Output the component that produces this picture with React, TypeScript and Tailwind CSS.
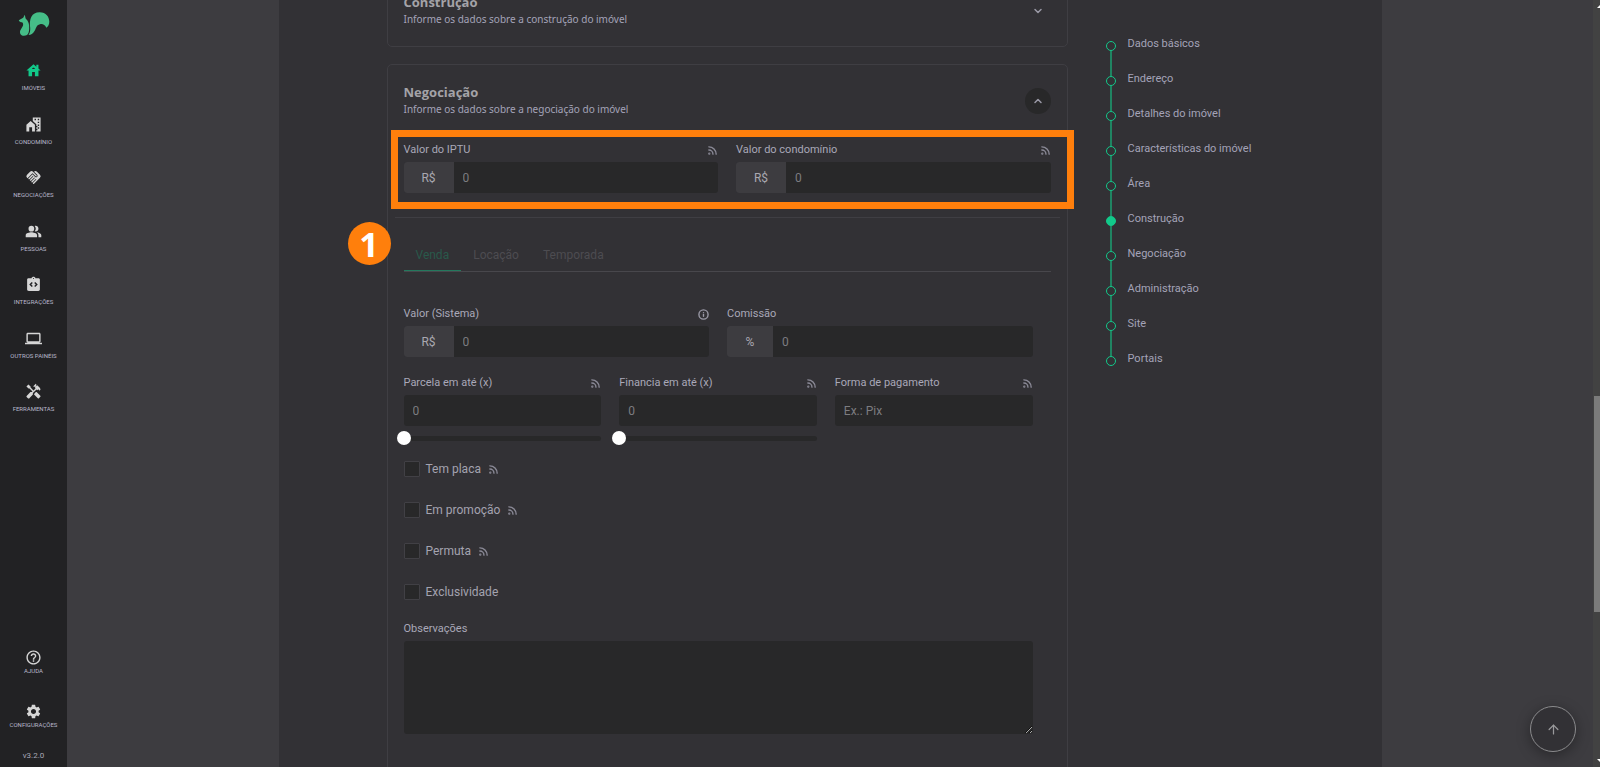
import { ReactNode } from "react"
import { ArrowUp, ChevronDown, ChevronUp, Info, Rss } from "lucide-react"
import {
  MdComputer,
  MdHandshake,
  MdHandyman,
  MdHelpOutline,
  MdHouse,
  MdIntegrationInstructions,
  MdPeopleAlt,
  MdSettings,
} from "react-icons/md"

function CondoIcon({ className }: { className?: string }) {
  return (
    <svg viewBox="0 0 24 24" fill="currentColor" className={className}>
      <path d="M2 22V12.500L8 7l6 5.500V22h-4v-6H6v6z" />
      <path
        fillRule="evenodd"
        d="M11 2h11v20h-6v-2h1.500v-2H16v-2h1.500v-2H16v-2.500l-5-4.500zM13.500 4v2h2V4zM18 4v2h2V4zM18 8v2h2V8zM18 12v2h2v-2zM18 16v2h2v-2z"
      />
    </svg>
  )
}

const mainMenu = [
  { label: "Imóveis", icon: MdHouse, active: true },
  { label: "Condomínio", icon: CondoIcon },
  { label: "Negociações", icon: MdHandshake },
  { label: "Pessoas", icon: MdPeopleAlt },
  { label: "Integrações", icon: MdIntegrationInstructions },
  { label: "Outros painéis", icon: MdComputer },
  { label: "Ferramentas", icon: MdHandyman },
]

const steps = [
  "Dados básicos",
  "Endereço",
  "Detalhes do imóvel",
  "Características do imóvel",
  "Área",
  "Construção",
  "Negociação",
  "Administração",
  "Site",
  "Portais",
]

const options = [
  { id: "placa", label: "Tem placa", feed: true },
  { id: "promocao", label: "Em promoção", feed: true },
  { id: "permuta", label: "Permuta", feed: true },
  { id: "exclusividade", label: "Exclusividade", feed: false },
]

function Logo() {
  return (
    <svg viewBox="0 0 33 26" className="w-[33px] h-[26px]" aria-label="Início">
      <path
        fill="#45bd87"
        d="M1.800 9.200L6.200 6.800 7.800 3.800l.8 3.800c2.900 2.400 4 5.900 3.600 10.400-.2 3-.8 4.800-2.200 6-2.500 1.400-6 1-6.800-1.500C2.200 19.500 5 17.500 6 14.600c.4-1.600 0-2.800-1-3.300-1.400-.1-2.800-.5-3.200-2.100z"
      />
      <path
        fill="#45bd87"
        d="M13.200 17C12 8 14.500 1.300 22.700 1.300c6.300 0 9.600 4.700 9.600 9.400 0 2.800-1.300 5.100-3 6.100-1.300-3.300-3.800-4.200-6.300-3.600-4 1-3.500 3.800-5.500 6.800-1.500 2.600-3.500 4-6 4 1.300-2 1.900-4 1.700-7z"
      />
    </svg>
  )
}

function MenuItem({ label, icon: Icon, active }: { label: string; icon: any; active?: boolean }) {
  return (
    <a href="#" className="flex flex-1 flex-col items-center gap-1">
      <Icon className={active ? "w-[17px] h-[17px] text-[#12c98a]" : "w-[17px] h-[17px] text-[#d6d6d6]"} />
      <span className="text-[6px] leading-[10px] uppercase whitespace-nowrap text-[#b9b8cc]">{label}</span>
    </a>
  )
}

function Feed() {
  return <Rss className="w-[11px] h-[11px] text-[#8b8a97]" strokeWidth={3} />
}

type FieldProps = {
  id: string
  label: string
  addon?: string
  placeholder?: string
  hint?: ReactNode
  slider?: boolean
}

function Field({ id, label, addon, placeholder = "0", hint, slider }: FieldProps) {
  return (
    <div className="min-w-0">
      <div className="flex items-center justify-between h-4 mb-1">
        <label htmlFor={id} className="text-[11px] leading-4 text-[#a9a8b8]">{label}</label>
        {hint}
      </div>
      <div className="flex h-[31px] rounded-[3px] overflow-hidden bg-[#282829]">
        {addon && (
          <span className={`${addon === "%" ? "w-[46px]" : "w-[50px]"} shrink-0 flex items-center justify-center bg-[#3d3c40] text-xs text-[#a9a8b0]`}>
            {addon}
          </span>
        )}
        <input
          id={id}
          type="text"
          placeholder={placeholder}
          className="flex-1 min-w-0 px-[9px] bg-transparent text-xs text-[#a9a8b8] placeholder:text-[#7c7c80] outline-none"
        />
      </div>
      {slider && (
        <div className="grid items-center mt-[5px]">
          <div className="col-start-1 row-start-1 h-[5px] rounded-full bg-[#282829]" />
          <input
            type="range"
            min={0}
            max={100}
            defaultValue={0}
            aria-label={label}
            className="col-start-1 row-start-1 -mx-[7px] h-[14px] appearance-none bg-transparent [&::-webkit-slider-thumb]:appearance-none [&::-webkit-slider-thumb]:w-[14px] [&::-webkit-slider-thumb]:h-[14px] [&::-webkit-slider-thumb]:rounded-full [&::-webkit-slider-thumb]:bg-white"
          />
        </div>
      )}
    </div>
  )
}

function CardHeader({ title, text, open }: { title: string; text: string; open?: boolean }) {
  return (
    <div className="flex items-center justify-between">
      <div>
        <h2 className="font-['Open_Sans'] text-[13px] leading-4 font-bold text-[#a4a3a8]">{title}</h2>
        <p className="font-['Noto_Sans'] text-[10px] leading-[18px] text-[#a4a3b8]">{text}</p>
      </div>
      <button
        type="button"
        aria-label={title}
        className={`flex items-center justify-center w-[26px] h-[26px] rounded-full text-[#9a99a6] ${open ? "bg-[#282829]" : ""}`}
      >
        {open ? <ChevronUp className="w-3 h-3" strokeWidth={3} /> : <ChevronDown className="w-3 h-3" strokeWidth={3} />}
      </button>
    </div>
  )
}

export default function App() {
  return (
    <div className="flex h-screen overflow-hidden bg-[#3d3c40] font-[Roboto,sans-serif]">
      {/* Sidebar */}
      <aside className="flex flex-col w-[67px] shrink-0 pt-[11px] bg-[#222224]">
        <a href="#" className="flex justify-center mb-[25px]">
          <Logo />
        </a>
        <nav className="flex flex-col h-[375px]">
          {mainMenu.map((item) => (
            <MenuItem key={item.label} {...item} />
          ))}
        </nav>
        <div className="flex flex-col mt-auto">
          <a href="#" className="flex flex-col items-center h-[54px]">
            <MdHelpOutline className="w-[17px] h-[17px] text-[#d6d6d6]" />
            <span className="text-[6px] leading-[10px] uppercase text-[#b9b8cc]">Ajuda</span>
          </a>
          <a href="#" className="flex flex-col items-center h-[47px]">
            <MdSettings className="w-[17px] h-[17px] text-[#d6d6d6]" />
            <span className="text-[6px] leading-[10px] uppercase text-[#b9b8cc]">Configurações</span>
          </a>
          <span className="pb-[5px] text-center text-[8px] leading-[12px] text-[#a9a8b8]">v3.2.0</span>
        </div>
      </aside>

      {/* Page */}
      <main className="flex-1 min-w-0">
        <div className="flex w-full max-w-[1103px] min-h-full mx-auto bg-[#323135]">
          <form className="flex-1 min-w-0 max-w-[789px] pl-[108px]">
            <section className="-mt-[26px] mb-[17px] pt-[19px] pb-[18px] px-4 border border-[#3f3e43] rounded-[5px]">
              <CardHeader title="Construção" text="Informe os dados sobre a construção do imóvel" />
            </section>

            <section className="pt-[19px] pb-[120px] px-4 border border-[#3f3e43] rounded-[5px]">
              <CardHeader title="Negociação" text="Informe os dados sobre a negociação do imóvel" open />

              {/* Highlighted fields */}
              <div className="-ml-[13px] -mr-[23px] mt-3 pt-[5px] pb-[9px] pl-[6px] pr-4 border-7 border-[#ff7f0c]">
                <div className="grid grid-cols-2 gap-[18px]">
                  <Field id="iptu" label="Valor do IPTU" addon="R$" hint={<Feed />} />
                  <Field id="condominio" label="Valor do condomínio" addon="R$" hint={<Feed />} />
                </div>
              </div>
              <div className="relative">
                <span className="absolute -left-[56px] top-[13px] flex items-center justify-center w-[43px] h-[43px] rounded-full bg-[#ff7f0c] font-['Open_Sans'] text-[34px] leading-none font-bold text-white">
                  1
                </span>
              </div>
              <hr className="mt-2 -mx-[9px] border-[#3f3e43]" />

              <div role="tablist" className="flex mt-[21px] border-b border-[#48474c] text-xs text-[#4d4c51]">
                <button type="button" role="tab" aria-selected="true" className="-mb-px px-3 h-8 border-b border-[#24785d] text-[#29594b]">Venda</button>
                <button type="button" role="tab" aria-selected="false" className="px-3 h-8">Locação</button>
                <button type="button" role="tab" aria-selected="false" className="px-3 h-8">Temporada</button>
              </div>

              <div className="mt-[34px] pr-[18px]">
                <div className="grid grid-cols-2 gap-[18px]">
                  <Field id="valor" label="Valor (Sistema)" addon="R$" hint={<Info className="w-[11px] h-[11px] text-[#9a99a6]" strokeWidth={3} />} />
                  <Field id="comissao" label="Comissão" addon="%" />
                </div>
                <div className="grid grid-cols-3 gap-[18px] mt-[18px]">
                  <Field id="parcela" label="Parcela em até (x)" hint={<Feed />} slider />
                  <Field id="financia" label="Financia em até (x)" hint={<Feed />} slider />
                  <Field id="pagamento" label="Forma de pagamento" placeholder="Ex.: Pix" hint={<Feed />} />
                </div>

                <div className="flex flex-col gap-[25px] mt-4">
                  {options.map((option) => (
                    <div key={option.id} className="flex items-center h-4">
                      <input
                        id={option.id}
                        type="checkbox"
                        className="w-4 h-4 mr-[6px] appearance-none border border-[#414045] rounded-[1px] bg-[#282829]"
                      />
                      <label htmlFor={option.id} className="mr-[7px] text-xs text-[#a4a3b0]">{option.label}</label>
                      {option.feed && <Feed />}
                    </div>
                  ))}
                </div>

                <div className="mt-[21px]">
                  <label htmlFor="observacoes" className="block mb-1 text-[11px] leading-4 text-[#a9a8b8]">Observações</label>
                  <textarea id="observacoes" className="block w-full h-[93px] rounded-[3px] bg-[#282829] text-xs text-[#a9a8b8] outline-none" />
                </div>
              </div>
            </section>
          </form>

          {/* Steps */}
          <nav className="shrink-0 pt-9 pl-[38px]">
            <ol>
              {steps.map((step, i) => (
                <li key={step} className="flex h-[35px]">
                  <div className="flex flex-col items-center w-[10px] mr-[12px] pt-[5px]">
                    <span className={`w-[10px] h-[10px] shrink-0 rounded-full border border-[#12c98a] ${step === "Construção" ? "bg-[#12c98a]" : ""}`} />
                    {i < steps.length - 1 && <span className="w-[2px] h-[25px] shrink-0 bg-[#208462]" />}
                  </div>
                  <a href="#" className="text-[11px] leading-4 text-[#a4a3b8]">{step}</a>
                </li>
              ))}
            </ol>
          </nav>
        </div>
      </main>

      {/* Scrollbar */}
      <div className="w-[7px] shrink-0 flex flex-col overflow-hidden bg-[#424242]">
        <svg viewBox="0 0 7 10" className="w-[7px] h-[10px] shrink-0">
          <path fill="#fff" d="M4 8l5-5v5z" />
        </svg>
        <div className="flex-[386]" />
        <div className="flex-[216] ml-px bg-[#7b7b7b]" />
        <div className="flex-[145]" />
        <svg viewBox="0 0 7 10" className="w-[7px] h-[10px] shrink-0">
          <path fill="#fff" d="M4 2h5v5z" />
        </svg>
      </div>

      <button
        type="button"
        aria-label="Voltar ao topo"
        className="fixed right-[24px] bottom-[15px] flex items-center justify-center w-[46px] h-[46px] rounded-full border border-[#8b8b8d] bg-[#323135] text-[#9a9a9c] shadow-[0_3px_14px_rgba(0,0,0,0.35)]"
      >
        <ArrowUp className="w-[15px] h-[15px]" strokeWidth={2} />
      </button>
    </div>
  )
}
